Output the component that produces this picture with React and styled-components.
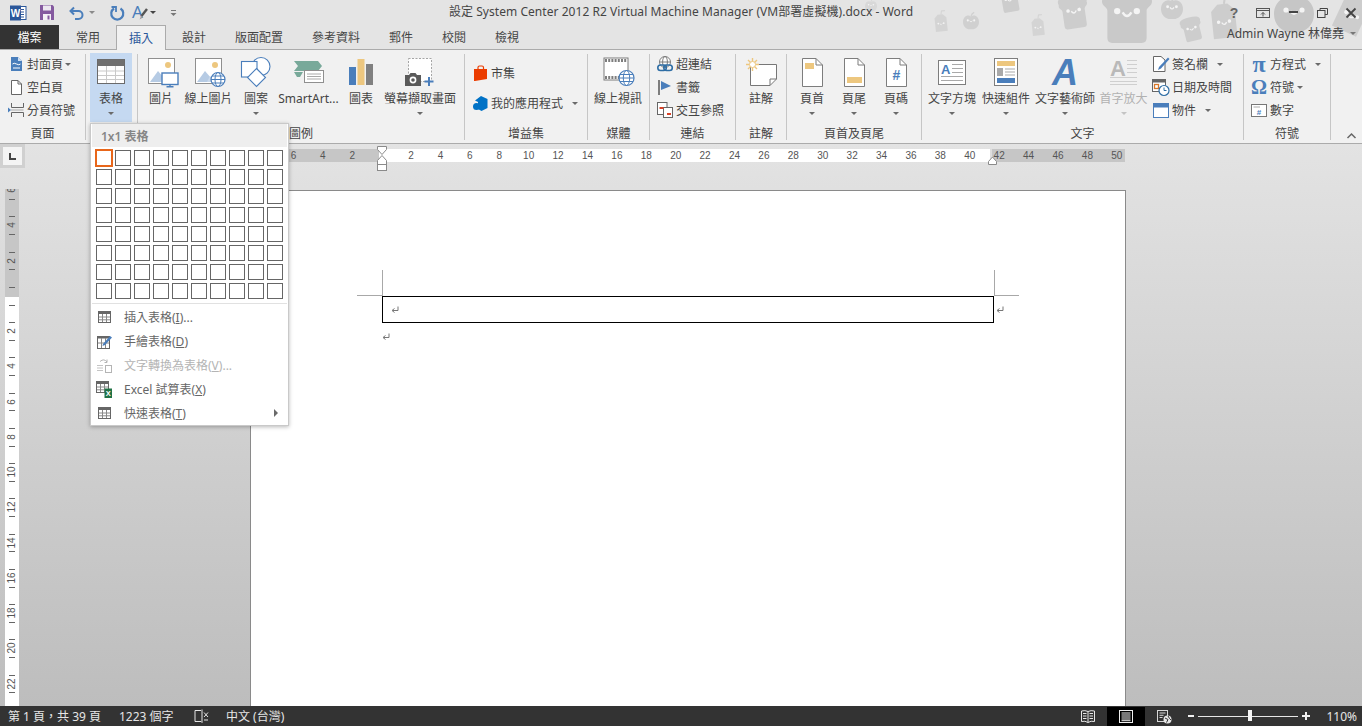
import React from "react";
import styled, { createGlobalStyle } from "styled-components";

const FONT = `"Noto Sans", "Noto Sans CJK TC", sans-serif`;
const BLUE = "#4a7ebb";
const ORANGE = "#edc77f";

const Global = createGlobalStyle`
  html, body { margin: 0; padding: 0; height: 100%; overflow: hidden; }
  body { font-family: ${FONT}; font-size: 12px; color: #444; }
  #root { height: 100%; }
`;

const Shell = styled.div`
  position: relative;
  width: 1362px;
  height: 726px;
  display: flex;
  flex-direction: column;
  overflow: hidden;
`;
const Header = styled.header`
  position: relative;
  background: #e4e4e4;
  flex: none;
  display: flex;
  flex-direction: column;
`;
const DoodleLayer = styled.svg`
  position: absolute;
  left: 0;
  top: 0;
`;
const TitleBar = styled.div`
  position: relative;
  height: 25px;
  display: grid;
  grid-template-columns: 1fr auto 1fr;
  align-items: center;
`;
const Qat = styled.div`
  display: flex;
  align-items: center;
  padding-left: 9px;
`;
const QatItem = styled.span`
  display: flex;
  margin-left: ${(p) => p.$ml || 0}px;
`;
const Title = styled.div`
  font-size: 12px;
  color: #444;
  white-space: nowrap;
  letter-spacing: 0.05px;
  line-height: 20px;
  padding-bottom: 2px;
`;
const WinControls = styled.div`
  display: flex;
  justify-content: flex-end;
  align-items: center;
`;
const WinBtn = styled.span`
  width: ${(p) => p.$w}px;
  padding-left: ${(p) => p.$pl || 0}px;
  box-sizing: border-box;
  display: flex;
  justify-content: center;
`;
const TabRow = styled.nav`
  position: relative;
  height: 25px;
  box-sizing: border-box;
  border-bottom: 1px solid #ababab;
  display: flex;
  align-items: stretch;
`;
const FileTab = styled.div`
  width: 59px;
  background: #333;
  color: #fff;
  display: flex;
  align-items: center;
  justify-content: center;
  margin-right: 2.5px;
`;
const Tab = styled.div`
  padding: 0 ${(p) => (p.$active ? 12 : 13)}px;
  margin: 0 ${(p) => (p.$active ? 1.5 : 0.5)}px;
  border: 1px solid ${(p) => (p.$active ? "#ababab" : "transparent")};
  border-bottom: ${(p) => (p.$active ? "none" : "1px solid transparent")};
  background: ${(p) => (p.$active ? "#f1f1f1" : "transparent")};
  color: ${(p) => (p.$active ? "#2b579a" : "#444")};
  height: ${(p) => (p.$active ? 25 : 24)}px;
  box-sizing: border-box;
  display: flex;
  align-items: center;
`;
const Account = styled.div`
  margin-left: auto;
  padding-right: 6px;
  height: 16px;
  display: flex;
  align-items: center;
  gap: 6px;
  color: #444;
  white-space: nowrap;
`;
const Ribbon = styled.section`
  position: relative;
  flex: none;
  height: 94px;
  box-sizing: border-box;
  background: #f1f1f1;
  border-bottom: 1px solid #ababab;
  display: flex;
  align-items: flex-start;
  padding-top: 4px;
`;
const Group = styled.div`
  width: ${(p) => p.$w}px;
  height: 86px;
  flex: none;
  box-sizing: border-box;
  border-right: 1px solid #c6c6c6;
  display: flex;
  flex-direction: column;
`;
const GroupBody = styled.div`
  height: 72px;
  display: flex;
  align-items: flex-start;
  padding-left: ${(p) => p.$pl || 0}px;
`;
const GroupLabel = styled.div`
  height: 14px;
  line-height: 16px;
  text-align: center;
  color: #444;
`;
const Big = styled.div`
  padding: 0 ${(p) => (p.$px === undefined ? 6 : p.$px)}px;
  width: ${(p) => (p.$w ? `${p.$w}px` : "auto")};
  height: ${(p) => (p.$active ? 69 : 70)}px;
  margin-top: ${(p) => (p.$active ? -1 : 0)}px;
  box-sizing: border-box;
  flex: none;
  background: ${(p) => (p.$active ? "#c5d9f1" : "transparent")};
  color: ${(p) => (p.$disabled ? "#b1b1b1" : "#444")};
  display: flex;
  flex-direction: column;
  align-items: center;
  white-space: nowrap;
`;
const BigIcon = styled.div`
  height: ${(p) => (p.$active ? 38 : 37)}px;
  box-sizing: border-box;
  padding-bottom: 1px;
  display: flex;
  align-items: center;
  justify-content: center;
`;
const BigLabel = styled.div`
  height: 16px;
  line-height: 16px;
`;
const BigArrow = styled.div`
  height: 13px;
  display: flex;
  align-items: center;
`;
const Caret = styled.span`
  display: inline-block;
  flex: none;
  width: 0;
  height: 0;
  border-left: 3.5px solid transparent;
  border-right: 3.5px solid transparent;
  border-top: 3.5px solid ${(p) => p.$c || "#6a6a6a"};
  margin-left: ${(p) => p.$ml || 0}px;
`;
const Stack = styled.div`
  height: 70px;
  box-sizing: border-box;
  padding-bottom: ${(p) => p.$pb}px;
  margin-left: ${(p) => p.$ml || 0}px;
  display: flex;
  flex-direction: column;
  justify-content: center;
  gap: ${(p) => p.$gap || 0}px;
  flex: none;
`;
const Small = styled.div`
  flex: none;
  height: 23px;
  display: flex;
  align-items: center;
  white-space: nowrap;
  color: #444;
`;
const SmallIcon = styled.span`
  width: 18px;
  margin-right: 2px;
  display: flex;
  justify-content: center;
  align-items: center;
`;
const GlyphIcon = styled.span`
  font-family: "Liberation Serif", serif;
  font-weight: bold;
  font-size: ${(p) => p.$s}px;
  line-height: 18px;
  color: ${BLUE};
`;
const Collapse = styled.div`
  position: absolute;
  right: 6px;
  bottom: 4px;
  display: flex;
`;
const Workspace = styled.main`
  position: relative;
  flex: 1;
  min-height: 0;
  overflow: hidden;
  background: linear-gradient(#e3e3e3, #bdbdbd);
  display: grid;
  grid-template-columns: 25px 225px 876px 1fr;
  grid-template-rows: 46px 1fr;
`;
const Corner = styled.div`
  grid-column: 1;
  grid-row: 1;
  height: 24px;
  box-sizing: border-box;
  padding: 3px;
  background: #d0d0d0;
`;
const CornerBtn = styled.div`
  width: 19px;
  height: 18px;
  background: #f4f4f4;
  display: flex;
  align-items: center;
  justify-content: center;
`;
const HRulerSlot = styled.div`
  grid-column: 3;
  grid-row: 1;
  padding-top: 5px;
  position: relative;
`;
const HRuler = styled.div`
  width: 875px;
  height: 13px;
  overflow: hidden;
  display: flex;
  background: linear-gradient(
    to right,
    #c6c6c6 129px,
    #fff 129px,
    #fff 740px,
    #dedede 740px,
    #dedede 742px,
    #c6c6c6 742px
  );
`;
const HTick = styled.span`
  flex: none;
  width: 29.42px;
  text-align: center;
  font: 10px/13px "Liberation Sans", sans-serif;
  color: #555;
  &:first-child {
    margin-left: -0.7px;
  }
`;
const RulerMarks = styled.svg`
  position: absolute;
  left: 120px;
  top: 0;
`;
const VRulerSlot = styled.div`
  grid-column: 1;
  grid-row: 2;
  margin: -1px 6px 0 5px;
  overflow: hidden;
  background: linear-gradient(#c6c6c6 108px, #fff 108px);
`;
const VTick = styled.div`
  position: relative;
  height: 35.25px;
  display: flex;
  align-items: center;
  justify-content: center;
  font: 10px/10px "Liberation Sans", sans-serif;
  color: #555;
  &:first-child {
    margin-top: -16.6px;
  }
  & > span {
    display: block;
    transform: rotate(-90deg);
  }
  &::before,
  &::after {
    content: "";
    position: absolute;
    left: 4px;
    width: 6px;
    height: 1px;
    background: #666;
  }
  &::before {
    top: 8.8px;
  }
  &::after {
    top: 26.4px;
  }
`;
const Page = styled.div`
  grid-column: 3;
  grid-row: 2;
  box-sizing: border-box;
  height: 700px;
  background: #fff;
  border: 1px solid #8a8a8a;
  padding: 105px 0 0 131px;
`;
const TableRow = styled.div`
  position: relative;
  display: flex;
  align-items: center;
`;
const DocTable = styled.div`
  width: 612px;
  height: 27px;
  box-sizing: border-box;
  border: 1px solid #000;
  padding-left: 8px;
  display: flex;
  align-items: center;
`;
const CropMark = styled.span`
  position: absolute;
  background: #a8a8a8;
  ${(p) =>
    p.$v
      ? `width:1px;height:26px;top:-26px;left:${p.$x}px;`
      : `height:1px;width:25px;top:-1px;left:${p.$x}px;`}
`;
const AfterMark = styled.span`
  display: flex;
  margin-left: 2px;
`;
const ParaMark = styled.div`
  display: flex;
  margin-top: 10px;
`;
const Status = styled.footer`
  flex: none;
  height: 20px;
  background: #333;
  color: #e6e6e6;
  display: flex;
  justify-content: space-between;
  align-items: stretch;
`;
const StatusSide = styled.div`
  display: flex;
  align-items: center;
  padding-left: ${(p) => p.$pl || 0}px;
  padding-right: ${(p) => p.$pr || 0}px;
`;
const StatusItem = styled.span`
  width: ${(p) => (p.$w ? `${p.$w}px` : "auto")};
  display: flex;
  align-items: center;
  white-space: nowrap;
`;
const ViewBtn = styled.span`
  width: 38px;
  height: 19px;
  margin-top: 1px;
  display: flex;
  align-items: center;
  justify-content: center;
  background: ${(p) => (p.$active ? "#000" : "transparent")};
`;
const Slider = styled.div`
  position: relative;
  width: 100px;
  height: 1px;
  margin: 0 4px;
  background: #e6e6e6;
`;
const Thumb = styled.span`
  position: absolute;
  left: 50px;
  top: -5.5px;
  width: 4px;
  height: 11px;
  background: #f4f4f4;
`;
const Percent = styled.span`
  width: 37px;
  margin-left: 10px;
  text-align: right;
`;
const ZoomSign = styled.span`
  display: flex;
  width: 8px;
  margin-left: ${(p) => p.$ml || 0}px;
`;
const Menu = styled.div`
  position: absolute;
  left: 90px;
  top: 123px;
  width: 199px;
  box-sizing: border-box;
  background: #fff;
  border: 1px solid #c9c9c9;
  box-shadow: 0 1px 4px rgba(0, 0, 0, 0.28);
  display: flex;
  flex-direction: column;
`;
const MenuHead = styled.div`
  height: 23px;
  margin: 0 1px;
  padding-left: 9px;
  background: #eeeeee;
  color: #868686;
  font-weight: 600;
  line-height: 25px;
`;
const Grid = styled.div`
  display: grid;
  grid-template-columns: repeat(10, 16px);
  grid-auto-rows: 16px;
  gap: 3px;
  padding: 3px 0 0 5px;
`;
const Cell = styled.span`
  box-sizing: border-box;
  background: #fff;
  border: 1px solid ${(p) => (p.$on ? "#e8661a" : "#666")};
  box-shadow: ${(p) => (p.$on ? "0 0 0 1px #e8661a" : "none")};
`;
const MenuSep = styled.div`
  height: 1px;
  margin: 4px 1px 1px;
  background: #e1e1e1;
`;
const MenuItem = styled.div`
  height: 24px;
  display: flex;
  align-items: center;
  color: ${(p) => (p.$disabled ? "#b4b4b4" : "#666")};
  white-space: nowrap;
`;
const MenuIcon = styled.span`
  width: 18px;
  margin: 0 11px 0 4px;
  display: flex;
  justify-content: center;
`;
const SubArrow = styled.span`
  margin-left: auto;
  margin-right: 10px;
  width: 0;
  height: 0;
  border-top: 4px solid transparent;
  border-bottom: 4px solid transparent;
  border-left: 4px solid #6a6a6a;
`;

const I = ({ w, h, pad = 0, children }) => (
  <svg width={w + pad} height={h} viewBox={`${-pad} 0 ${w + pad} ${h}`} style={{ display: "block", overflow: "visible" }}>
    {children}
  </svg>
);

const Face = ({ s = 1 }) => (
  <g fill="none" stroke="#f4f4f4">
    <circle cx={-4 * s} cy={-2 * s} r={1.3 * s} fill="#f4f4f4" stroke="none" />
    <circle cx={4 * s} cy={-2 * s} r={1.3 * s} fill="#f4f4f4" stroke="none" />
    <path d={`M${-1.8 * s} ${-1.5 * s} Q0 ${1.5 * s} ${1.8 * s} ${-1.5 * s}`} strokeWidth={s} />
  </g>
);
const Toast = ({ x, y, s, r = 0, c = "#cdcdcd" }) => (
  <g transform={`translate(${x} ${y}) rotate(${r}) scale(${s})`}>
    <path
      fill={c}
      d="M-10-7C-12-12-6-13 0-13S12-12 10-7C11-4 8-4 8-2V9Q8 11 6 11H-6Q-8 11-8 9V-2C-8-4-11-4-10-7Z"
    />
    <Face />
  </g>
);
const Apple = ({ x, y, s, c = "#cdcdcd" }) => (
  <g transform={`translate(${x} ${y}) scale(${s})`}>
    <path fill={c} d="M0-7C-5-10-10-6-10 0S-5 10 0 9C5 10 10 6 10 0S5-10 0-7Z" />
    <path stroke={c} strokeWidth="1.6" fill="none" d="M0-7Q1-11 4-12" />
    <Face />
  </g>
);
const Juice = ({ x, y, s, r = 0, c = "#cdcdcd" }) => (
  <g transform={`translate(${x} ${y}) rotate(${r}) scale(${s})`}>
    <path fill={c} d="M-7-6L-3-10H3L7-6V10H-7Z" />
    <path stroke={c} strokeWidth="1.2" fill="none" d="M1-10L2-14H6" />
    <g transform="translate(0 2)">
      <Face s={0.8} />
    </g>
  </g>
);
const Doodles = () => (
  <DoodleLayer width="1362" height="50" viewBox="0 0 1362 50">
    <Apple x={871} y={6} s={0.6} c="#d8d8d8" />
    <Juice x={941} y={23} s={0.85} r={-6} c="#d4d4d4" />
    <Apple x={971} y={22} s={0.8} c="#d0d0d0" />
    <Toast x={1010} y={1} s={1} r={-10} />
    <Juice x={1038} y={27} s={0.85} r={-6} c="#d4d4d4" />
    <Toast x={1074} y={13} s={1.4} r={-8} />
    <Toast x={1127} y={16} s={2.45} c="#c9c9c9" />
    <Apple x={1172} y={9} s={1.1} />
    <Toast x={1192} y={30} s={1} r={-14} />
    <Juice x={1224} y={21} s={1.7} r={-6} />
    <Apple x={1294} y={14} s={2} c="#c6c6c6" />
    <Juice x={1352} y={14} s={1.9} r={25} />
  </DoodleLayer>
);

const WordLogo = () => (
  <I w={18} h={16}>
    <rect x="8" y="1.5" width="9" height="13" fill="#fff" stroke="#2b579a" />
    <path d="M12 4.5h3M12 7h3M12 9.5h3M12 12h3" stroke="#2b579a" />
    <rect x="1" y="0.5" width="11" height="15" fill="#2b579a" />
    <text x="6.5" y="11.5" fontSize="10" fontWeight="700" fill="#fff" textAnchor="middle" fontFamily="Liberation Sans">W</text>
  </I>
);
const SaveIcon = () => (
  <I w={14} h={15}>
    <path d="M0 0H12.5L14 1.5V15H0Z" fill="#84599f" />
    <rect x="3" y="0.5" width="8" height="5" fill="#ece7f0" />
    <rect x="3" y="9" width="8" height="6" fill="#f4f0f6" />
    <rect x="7.5" y="10.5" width="2" height="4" fill="#84599f" />
  </I>
);
const UndoIcon = () => (
  <I w={15} h={14}>
    <path d="M5 1.5L1.5 5L5 8.5M1.5 5H9.5A4 4 0 0 1 9.5 13H6" fill="none" stroke={BLUE} strokeWidth="2" />
  </I>
);
const RedoIcon = () => (
  <I w={14} h={14}>
    <path d="M4 2.5A6 6 0 1 0 10.5 2.5" fill="none" stroke={BLUE} strokeWidth="2.2" />
    <path d="M1.5 1H6V6" fill="none" stroke={BLUE} strokeWidth="1.8" />
  </I>
);
const FormatIcon = () => (
  <I w={16} h={17}>
    <text x="0" y="14" fontSize="17" fill={BLUE} fontFamily="Noto Sans">A</text>
    <path d="M15 5L9.5 12" stroke="#555" strokeWidth="2.4" />
    <path d="M9.5 11.5L7.5 15.5L11 13.5Z" fill="#9a9a9a" />
  </I>
);
const Customize = () => (
  <I w={7} h={8}>
    <path d="M1 1.5H6" stroke="#777" />
    <path d="M0.5 4H6.5L3.5 7Z" fill="#777" />
  </I>
);
const HelpIcon = () => (
  <I w={10} h={12}>
    <text x="5" y="11" fontSize="14" fontWeight="700" fill="#666" textAnchor="middle" fontFamily="Liberation Sans">?</text>
  </I>
);
const DisplayIcon = () => (
  <I w={14} h={10}>
    <rect x="0.5" y="0.5" width="13" height="9" fill="none" stroke="#555" />
    <path d="M1 2.5H13" stroke="#555" />
    <path d="M7 8.5V4.5M5 6.5L7 4.5L9 6.5" fill="none" stroke="#555" />
  </I>
);
const MinIcon = () => (
  <I w={9} h={3}>
    <rect width="9" height="2" fill="#444" />
  </I>
);
const RestoreIcon = () => (
  <I w={11} h={10}>
    <path d="M3 2.5V0.5H10.5V6.5H8" fill="none" stroke="#444" />
    <rect x="0.5" y="2.5" width="7.5" height="7" fill="none" stroke="#444" />
  </I>
);
const CloseIcon = () => (
  <I w={10} h={10}>
    <path d="M0.5 0.5L9.5 9.5M9.5 0.5L0.5 9.5" stroke="#444" strokeWidth="1.8" />
  </I>
);

const CoverIcon = () => (
  <I w={11} h={14}>
    <path d="M0 0H7L11 4V14H0Z" fill={BLUE} />
    <path d="M7 0V4H11" fill="#cfe0f3" />
    <path d="M1.5 7Q3 5.5 5.5 7T9.5 7" fill="none" stroke="#fff" />
    <path d="M2 11H9" stroke="#fff" />
  </I>
);
const BlankIcon = () => (
  <I w={11} h={15}>
    <path d="M0.5 0.5H7L10.5 4V14.5H0.5Z" fill="#fff" stroke="#666" />
    <path d="M7 0.5V4H10.5" fill="none" stroke="#666" />
  </I>
);
const BreakIcon = () => (
  <I w={16} h={16}>
    <path d="M3.5 1V5.5H15.5V1M3.5 15V10.5H15.5V15" fill="none" stroke="#666" />
    <path d="M0 5.5L3 8L0 10.5Z" fill={BLUE} />
    <path d="M3 8H15.5" stroke="#aaa" />
  </I>
);
const TableBig = () => (
  <I w={28} h={25}>
    <rect x="0.5" y="0.5" width="27" height="24" fill="#fff" stroke="#6a6a6a" />
    <rect x="1" y="1" width="26" height="6" fill="#707070" />
    <path d="M1 12H27M1 16.5H27M1 20.5H27" stroke="#c9c9c9" />
    <path d="M9.5 7V24M18.5 7V24" stroke="#c9c9c9" />
  </I>
);
const PicBase = () => (
  <>
    <rect x="0.5" y="0.5" width="26" height="25" fill="#fff" stroke="#8f8f8f" />
    <circle cx="20" cy="7" r="3" fill={ORANGE} />
    <path d="M2 24L10 13L16 20L16 24Z" fill="#b6cbe4" />
    <path d="M12 24L15 18L20 24Z" fill="#c9d9ec" />
  </>
);
const PictureIcon = () => (
  <I w={31} h={29} pad={4}>
    <PicBase />
    <rect x="14" y="15" width="16" height="11.5" fill="#fff" stroke={BLUE} strokeWidth="1.4" />
    <path d="M22 26.5V29M18.5 28.7H25.5" stroke={BLUE} strokeWidth="1.4" />
  </I>
);
const OnlinePicIcon = () => (
  <I w={31} h={29} pad={4}>
    <PicBase />
    <circle cx="23" cy="21.5" r="7" fill="#fff" stroke={BLUE} strokeWidth="1.2" />
    <ellipse cx="23" cy="21.5" rx="3" ry="7" fill="none" stroke={BLUE} />
    <path d="M16 21.5H30M17 18H29M17 25H29" stroke={BLUE} />
  </I>
);
const ShapesIcon = () => (
  <I w={30} h={30}>
    <circle cx="20" cy="9.5" r="9" fill="#fff" stroke={BLUE} strokeWidth="1.1" />
    <rect x="0.5" y="4.5" width="15.5" height="15.5" fill="#fff" stroke={BLUE} strokeWidth="1.1" />
    <path d="M15.5 11.5L24.5 20.5L15.5 29.5L6.5 20.5Z" fill="#fff" stroke={BLUE} strokeWidth="1.1" />
  </I>
);
const SmartArtIcon = () => (
  <I w={30} h={24}>
    <path d="M0 1H24L28 6L24 11H0L4 6Z" fill="#78a99a" />
    <path d="M0 12H9L6 17H3Z" fill="#78a99a" />
    <rect x="10.5" y="10.5" width="19" height="12" fill="#fff" stroke="#8f8f8f" />
    <path d="M13 14H27M13 16.5H27M13 19H27" stroke="#a9a9a9" />
  </I>
);
const ChartIcon = () => (
  <I w={24} h={26}>
    <rect x="0" y="8" width="7" height="18" fill={BLUE} />
    <rect x="8.5" y="0" width="7" height="26" fill={ORANGE} />
    <rect x="17" y="5" width="7" height="21" fill="#808080" />
  </I>
);
const ScreenshotIcon = () => (
  <I w={30} h={29}>
    <rect x="3.5" y="0.5" width="23" height="23" fill="#fff" stroke="#a5a5a5" strokeDasharray="2 1.5" />
    <path d="M0 17H4L5.5 15H10.5L12 17H16V28H0Z" fill="#5a5a5a" />
    <circle cx="8" cy="22" r="3.4" fill="#fff" />
    <circle cx="8" cy="22" r="1.8" fill="#5a5a5a" />
    <path d="M24 19V28M19.5 23.5H28.5" stroke={BLUE} strokeWidth="2" />
  </I>
);
const StoreIcon = () => (
  <I w={15} h={16}>
    <path d="M5 4V2.5Q5 1 6.5 1H9Q10.5 1 10.5 2.5V4" fill="none" stroke="#eb3c00" strokeWidth="1.2" />
    <path d="M1 4H14V14L2 16H1Z" fill="#eb3c00" />
  </I>
);
const MyAppsIcon = () => (
  <I w={15} h={15}>
    <path d="M8 0L14.5 3V12L8.5 15L5 13V6L2 4.5Z" fill="#0072c6" />
    <circle cx="3.5" cy="10.5" r="3.5" fill="#0072c6" />
  </I>
);
const VideoIcon = () => (
  <I w={33} h={30} pad={3}>
    <rect x="1" y="1" width="24" height="22" fill="#fff" stroke="#7d7d7d" />
    <path d="M2 3.5H24M2 20.5H24" stroke="#7d7d7d" strokeWidth="3" strokeDasharray="2 1.2" />
    <circle cx="23.5" cy="21" r="7.5" fill="#fff" stroke={BLUE} strokeWidth="1.2" />
    <ellipse cx="23.5" cy="21" rx="3.2" ry="7.5" fill="none" stroke={BLUE} />
    <path d="M16 21H31M17 17.5H30M17 24.5H30" stroke={BLUE} />
  </I>
);
const LinkIcon = () => (
  <I w={16} h={16}>
    <circle cx="8" cy="6" r="5.5" fill="#fff" stroke="#7d7d7d" />
    <ellipse cx="8" cy="6" rx="2.4" ry="5.5" fill="none" stroke="#7d7d7d" />
    <path d="M2.5 6H13.5" stroke="#7d7d7d" />
    <rect x="0.8" y="9" width="8.5" height="5.5" rx="2.7" fill="none" stroke="#2f6ea5" strokeWidth="1.6" />
    <rect x="6.8" y="9" width="8.5" height="5.5" rx="2.7" fill="none" stroke="#2f6ea5" strokeWidth="1.6" />
  </I>
);
const BookmarkIcon = () => (
  <I w={14} h={15}>
    <rect x="0" y="0" width="2" height="15" fill="#7d7d7d" />
    <path d="M3 1L13 6L3 10Z" fill={BLUE} />
  </I>
);
const CrossRefIcon = () => (
  <I w={16} h={16}>
    <rect x="0.5" y="0.5" width="9.5" height="12" fill="#fff" stroke="#666" />
    <rect x="6.5" y="5.5" width="9" height="10" fill="#fff" stroke="#666" />
    <rect x="2.5" y="5" width="4" height="2" fill="#d9432a" />
    <rect x="10" y="11" width="4" height="2" fill="#d9432a" />
  </I>
);
const CommentIcon = () => (
  <I w={31} h={28}>
    <path d="M4.5 6.5H30.5V21L24 27.5H4.5Z" fill="#fff" stroke="#777" />
    <path d="M24 27.5V21H30.5" fill="none" stroke="#777" />
    <g stroke={ORANGE} strokeWidth="1.4">
      <path d="M6.5 0V13M0 6.5H13M2 2L11 11M11 2L2 11" />
    </g>
    <circle cx="6.5" cy="6.5" r="3" fill="#fff" stroke={ORANGE} />
  </I>
);
const DocOutline = ({ children }) => (
  <I w={21} h={29}>
    <path d="M0.5 0.5H14L20.5 7V28.5H0.5Z" fill="#fff" stroke="#7d7d7d" />
    <path d="M14 0.5V7H20.5" fill="none" stroke="#7d7d7d" />
    {children}
  </I>
);
const TextBoxIcon = () => (
  <I w={28} h={25}>
    <rect x="0.5" y="0.5" width="27" height="24" fill="#fff" stroke="#7d7d7d" />
    <text x="3" y="14" fontSize="13" fontWeight="700" fill={BLUE} fontFamily="Liberation Sans">A</text>
    <path d="M14 4.5H25M14 8.5H25M14 12.5H25M3 16.5H25M3 20.5H25" stroke="#a9a9a9" />
  </I>
);
const QuickPartsIcon = () => (
  <I w={24} h={28}>
    <rect x="0.5" y="0.5" width="23" height="27" fill="#fff" stroke="#7d7d7d" />
    <rect x="3" y="3" width="18" height="5" fill={ORANGE} />
    <rect x="3" y="10" width="6" height="8" fill="#a9a9a9" />
    <path d="M11 11H21M11 14H21M11 17H21" stroke="#a9a9a9" />
    <rect x="3" y="20" width="18" height="5" fill={BLUE} />
  </I>
);
const WordArtIcon = () => (
  <I w={26} h={28}>
    <text x="13" y="27" fontSize="36" fontWeight="700" fontStyle="italic" fill={BLUE} textAnchor="middle" fontFamily="Liberation Sans">A</text>
  </I>
);
const DropCapIcon = () => (
  <I w={28} h={28}>
    <text x="0" y="18" fontSize="22" fontWeight="700" fill="#b9b9b9" fontFamily="Liberation Sans">A</text>
    <path d="M17 2.5H27M17 6.5H27M17 10.5H27M17 14.5H27M0 19.5H27M0 23.5H27M0 26.5H27" stroke="#cfcfcf" />
  </I>
);
const SignIcon = () => (
  <I w={17} h={16}>
    <path d="M0.5 0.5H8L12 4V15.5H0.5Z" fill="#fff" stroke="#666" />
    <path d="M6 11L15 1.5L16.5 3L8 12.5L5 14Z" fill={BLUE} />
  </I>
);
const DateIcon = () => (
  <I w={18} h={17}>
    <rect x="0.5" y="0.5" width="13" height="12" fill="#fff" stroke="#666" />
    <rect x="0.5" y="0.5" width="13" height="3" fill="#666" />
    <rect x="2.5" y="5.5" width="4" height="4" fill="none" stroke="#d9782a" strokeWidth="1.3" />
    <circle cx="12" cy="11.5" r="5" fill="#fff" stroke="#2f6ea5" strokeWidth="1.2" />
    <path d="M12 8.5V11.5H14.5" fill="none" stroke="#2f6ea5" />
  </I>
);
const ObjectIcon = () => (
  <I w={16} h={15}>
    <rect x="0.5" y="0.5" width="15" height="14" fill="#fff" stroke={BLUE} />
    <rect x="0.5" y="0.5" width="15" height="4" fill={BLUE} />
  </I>
);
const NumberIcon = () => (
  <I w={16} h={13}>
    <rect x="0.5" y="0.5" width="15" height="12" fill="#fff" stroke="#777" />
    <path d="M2.5 3H9" stroke="#aaa" />
    <text x="8" y="11" fontSize="8" fontWeight="700" fill={BLUE} textAnchor="middle" fontFamily="Liberation Sans">#</text>
  </I>
);
const Chevron = () => (
  <I w={9} h={6}>
    <path d="M0.5 5L4.5 1L8.5 5" fill="none" stroke="#666" strokeWidth="1.5" />
  </I>
);
const LIcon = () => (
  <I w={7} h={7}>
    <path d="M1 0V6H7" fill="none" stroke="#444" strokeWidth="2" />
  </I>
);
const ReturnMark = () => (
  <I w={8} h={8}>
    <path d="M7 0.5V4.5H1.5M3.5 2.5L1 4.5L3.5 6.5" fill="none" stroke="#777" />
  </I>
);

const TableSmall = () => (
  <I w={13} h={12}>
    <rect x="0.5" y="0.5" width="12" height="11" fill="#fff" stroke="#666" />
    <rect x="0.5" y="0.5" width="12" height="2.5" fill="#666" />
    <path d="M1 6H12M1 8.8H12M4.5 3V11M8.5 3V11" stroke="#888" />
  </I>
);
const DrawTableIcon = () => (
  <I w={15} h={15}>
    <rect x="0.5" y="2.5" width="12" height="12" fill="#fff" stroke="#666" />
    <rect x="0.5" y="2.5" width="12" height="2" fill="#666" />
    <path d="M1 9H12M4.5 4V14M8.5 4V14" stroke="#888" />
    <path d="M6 10L13 2L15 3.5L8 11L5.5 12Z" fill={BLUE} />
  </I>
);
const ConvertIcon = () => (
  <I w={15} h={15}>
    <path d="M0 7.5H6M0 10H6M0 12.5H6" stroke="#c4c4c4" />
    <rect x="8.5" y="7.5" width="6" height="7" fill="#fff" stroke="#b4b4b4" />
    <path d="M3 3.5Q7 0 10 4M10 1.5V4.5H7.5" fill="none" stroke="#b4b4b4" />
  </I>
);
const ExcelIcon = () => (
  <I w={16} h={17}>
    <rect x="0.5" y="0.5" width="12" height="11" fill="#fff" stroke="#666" />
    <rect x="0.5" y="0.5" width="12" height="2.5" fill="#666" />
    <path d="M1 6H12M1 8.8H12M4.5 3V11M8.5 3V11" stroke="#888" />
    <rect x="8.5" y="7.5" width="7.5" height="9.5" fill="#207245" />
    <text x="12.2" y="15" fontSize="7.5" fontWeight="700" fill="#fff" textAnchor="middle" fontFamily="Liberation Sans">X</text>
  </I>
);

const StatusBook = () => (
  <I w={15} h={14}>
    <path d="M7 1.5H1V12.5H7L8 13.5V0.5" fill="none" stroke="#e6e6e6" />
    <path d="M10 3.5L14 8M14 3.5L10 8" stroke="#e6e6e6" />
    <path d="M10 11H14" stroke="#e6e6e6" />
  </I>
);
const ReadIcon = () => (
  <I w={14} h={13}>
    <path d="M7 1.5Q4 0 0.5 1V11.5Q4 10.5 7 12.5Q10 10.5 13.5 11.5V1Q10 0 7 1.5ZM7 1.5V12.5" fill="#333" stroke="#e6e6e6" />
    <path d="M2 3.5H5.5M2 6H5.5M2 8.5H5.5M8.5 3.5H12M8.5 6H12M8.5 8.5H12" stroke="#e6e6e6" />
  </I>
);
const PrintIcon = () => (
  <I w={14} h={13}>
    <rect x="0.5" y="0.5" width="13" height="12" fill="#000" stroke="#f0f0f0" />
    <path d="M2.5 3H11.5M2.5 5H11.5M2.5 7H11.5M2.5 9H11.5M2.5 10.7H11.5" stroke="#f0f0f0" />
  </I>
);
const WebIcon = () => (
  <I w={15} h={14}>
    <rect x="0.5" y="0.5" width="10" height="11" fill="#333" stroke="#d8d8d8" />
    <path d="M2.5 3H8.5M2.5 5.3H6.5M2.5 7.5H5.5" stroke="#d8d8d8" />
    <circle cx="10.5" cy="9.5" r="4" fill="#e6e6e6" />
    <path d="M8 8L11 9.5L9.5 12.5M11 6L12.5 8.5L14 10" stroke="#333" fill="none" />
  </I>
);
const MinusSign = () => (
  <I w={8} h={2}>
    <rect x="2" width="6" height="2" fill="#f0f0f0" />
  </I>
);
const PlusSign = () => (
  <I w={8} h={8}>
    <path d="M4 0V8M0 4H8" stroke="#f0f0f0" strokeWidth="2" />
  </I>
);

const BigButton = ({ icon, label, arrow, ...rest }) => (
  <Big {...rest}>
    <BigIcon $active={rest.$active}>{icon}</BigIcon>
    <BigLabel>{label}</BigLabel>
    {arrow && (
      <BigArrow>
        <Caret $c={rest.$disabled ? "#c4c4c4" : undefined} />
      </BigArrow>
    )}
  </Big>
);
const SmallButton = ({ icon, label, caret }) => (
  <Small>
    <SmallIcon>{icon}</SmallIcon>
    {label}
    {caret !== undefined && <Caret $ml={caret} />}
  </Small>
);

const hNums = ["8", "6", "4", "2", "", ...[2, 4, 6, 8, 10, 12, 14, 16, 18, 20, 22, 24, 26, 28, 30, 32, 34, 36, 38, 40, 42, 44, 46, 48, 50].map(String)];
const vNums = ["6", "4", "2", "", "2", "4", "6", "8", "10", "12", "14", "16", "18", "20", "22"];
const tabs = ["常用", "插入", "設計", "版面配置", "參考資料", "郵件", "校閱", "檢視"];

export default function App() {
  return (
    <Shell>
      <Global />
      <Header>
        <Doodles />
        <TitleBar>
          <Qat>
            <QatItem><WordLogo /></QatItem>
            <QatItem $ml={13}><SaveIcon /></QatItem>
            <QatItem $ml={15}><UndoIcon /></QatItem>
            <QatItem $ml={5}><Caret $c="#8a8a8a" /></QatItem>
            <QatItem $ml={15}><RedoIcon /></QatItem>
            <QatItem $ml={8}><FormatIcon /></QatItem>
            <QatItem $ml={2}><Caret $c="#444" /></QatItem>
            <QatItem $ml={14}><Customize /></QatItem>
          </Qat>
          <Title>設定 System Center 2012 R2 Virtual Machine Manager (VM部署虛擬機).docx - Word</Title>
          <WinControls>
            <WinBtn $w={29}><HelpIcon /></WinBtn>
            <WinBtn $w={29}><DisplayIcon /></WinBtn>
            <WinBtn $w={32.5}><MinIcon /></WinBtn>
            <WinBtn $w={24}><RestoreIcon /></WinBtn>
            <WinBtn $w={28} $pl={6}><CloseIcon /></WinBtn>
          </WinControls>
        </TitleBar>
        <TabRow>
          <FileTab>檔案</FileTab>
          {tabs.map((t) => (
            <Tab key={t} $active={t === "插入"}>{t}</Tab>
          ))}
          <Account>
            Admin Wayne 林偉堯
            <Caret $c="#777" />
          </Account>
        </TabRow>
      </Header>

      <Ribbon>
        <Group $w={86}>
          <GroupBody $pl={7}>
            <Stack $pb={4}>
              <SmallButton icon={<CoverIcon />} label="封面頁" caret={2} />
              <SmallButton icon={<BlankIcon />} label="空白頁" />
              <SmallButton icon={<BreakIcon />} label="分頁符號" />
            </Stack>
          </GroupBody>
          <GroupLabel>頁面</GroupLabel>
        </Group>
        <Group $w={52}>
          <GroupBody $pl={4}>
            <BigButton $active $w={42} icon={<TableBig />} label="表格" arrow />
          </GroupBody>
          <GroupLabel />
        </Group>
        <Group $w={327}>
          <GroupBody $pl={5}>
            <BigButton $w={36} $px={0} icon={<PictureIcon />} label="圖片" />
            <BigButton $w={59} $px={0} icon={<OnlinePicIcon />} label="線上圖片" />
            <BigButton $w={36} $px={0} icon={<ShapesIcon />} label="圖案" arrow />
            <BigButton $w={69} $px={0} icon={<SmartArtIcon />} label="SmartArt..." />
            <BigButton $w={36} $px={0} icon={<ChartIcon />} label="圖表" />
            <BigButton $w={82} $px={0} icon={<ScreenshotIcon />} label="螢幕擷取畫面" arrow />
          </GroupBody>
          <GroupLabel>圖例</GroupLabel>
        </Group>
        <Group $w={123}>
          <GroupBody $pl={6}>
            <Stack $pb={2} $gap={7}>
              <SmallButton icon={<StoreIcon />} label="市集" />
              <SmallButton icon={<MyAppsIcon />} label="我的應用程式" caret={9} />
            </Stack>
          </GroupBody>
          <GroupLabel>增益集</GroupLabel>
        </Group>
        <Group $w={62}>
          <GroupBody>
            <BigButton $w={60} $px={0} icon={<VideoIcon />} label="線上視訊" />
          </GroupBody>
          <GroupLabel>媒體</GroupLabel>
        </Group>
        <Group $w={86}>
          <GroupBody $pl={6}>
            <Stack $pb={4}>
              <SmallButton icon={<LinkIcon />} label="超連結" />
              <SmallButton icon={<BookmarkIcon />} label="書籤" />
              <SmallButton icon={<CrossRefIcon />} label="交互參照" />
            </Stack>
          </GroupBody>
          <GroupLabel>連結</GroupLabel>
        </Group>
        <Group $w={51}>
          <GroupBody>
            <BigButton $w={50} $px={0} icon={<CommentIcon />} label="註解" />
          </GroupBody>
          <GroupLabel>註解</GroupLabel>
        </Group>
        <Group $w={135}>
          <GroupBody $pl={4}>
            <BigButton $w={42} $px={0} arrow label="頁首" icon={
              <DocOutline><rect x="3" y="5" width="9" height="6" fill={ORANGE} /></DocOutline>
            } />
            <BigButton $w={42} $px={0} arrow label="頁尾" icon={
              <DocOutline><rect x="3" y="19" width="15" height="6" fill={ORANGE} /></DocOutline>
            } />
            <BigButton $w={42} $px={0} arrow label="頁碼" icon={
              <DocOutline>
                <text x="10.5" y="22" fontSize="14" fontWeight="700" fill={BLUE} textAnchor="middle" fontFamily="Liberation Sans">#</text>
              </DocOutline>
            } />
          </GroupBody>
          <GroupLabel>頁首及頁尾</GroupLabel>
        </Group>
        <Group $w={322}>
          <GroupBody $pl={3}>
            <BigButton $w={54} $px={0} icon={<TextBoxIcon />} label="文字方塊" arrow />
            <BigButton $w={54} $px={0} icon={<QuickPartsIcon />} label="快速組件" arrow />
            <BigButton $w={64} $px={0} icon={<WordArtIcon />} label="文字藝術師" arrow />
            <BigButton $w={53} $px={0} $disabled icon={<DropCapIcon />} label="首字放大" arrow />
            <Stack $pb={4} $ml={2}>
              <SmallButton icon={<SignIcon />} label="簽名欄" caret={9} />
              <SmallButton icon={<DateIcon />} label="日期及時間" />
              <SmallButton icon={<ObjectIcon />} label="物件" caret={9} />
            </Stack>
          </GroupBody>
          <GroupLabel>文字</GroupLabel>
        </Group>
        <Group $w={87}>
          <GroupBody $pl={6}>
            <Stack $pb={4}>
              <SmallButton icon={<GlyphIcon $s={24}>π</GlyphIcon>} label="方程式" caret={9} />
              <SmallButton icon={<GlyphIcon $s={20}>Ω</GlyphIcon>} label="符號" caret={3} />
              <SmallButton icon={<NumberIcon />} label="數字" />
            </Stack>
          </GroupBody>
          <GroupLabel>符號</GroupLabel>
        </Group>
        <Collapse><Chevron /></Collapse>
      </Ribbon>

      <Workspace>
        <Corner>
          <CornerBtn><LIcon /></CornerBtn>
        </Corner>
        <HRulerSlot>
          <HRuler>
            {hNums.map((n, i) => (
              <HTick key={i}>{n}</HTick>
            ))}
          </HRuler>
          <RulerMarks width="760" height="30" viewBox="0 0 760 30">
            <g fill="#fff" stroke="#8a8a8a">
              <path d="M7.5 2.5H16.5V5.5L12 10.5L7.5 5.5Z" />
              <path d="M12 11.5L16.5 16.5V20.5H7.5V16.5Z" />
              <rect x="7.5" y="20.5" width="9" height="6" />
              <path d="M618.5 20.5V17.5L622.5 13L626.5 17.5V20.5Z" />
            </g>
          </RulerMarks>
        </HRulerSlot>
        <VRulerSlot>
          {vNums.map((n, i) => (
            <VTick key={i}>
              <span>{n}</span>
            </VTick>
          ))}
        </VRulerSlot>
        <Page>
          <TableRow>
            <CropMark $v $x={0} />
            <CropMark $x={-25} />
            <CropMark $v $x={612} />
            <CropMark $x={612} />
            <DocTable>
              <ReturnMark />
            </DocTable>
            <AfterMark>
              <ReturnMark />
            </AfterMark>
          </TableRow>
          <ParaMark>
            <ReturnMark />
          </ParaMark>
        </Page>
      </Workspace>

      <Status>
        <StatusSide $pl={8}>
          <StatusItem $w={111}>第 1 頁，共 39 頁</StatusItem>
          <StatusItem $w={75}>1223 個字</StatusItem>
          <StatusItem $w={32}><StatusBook /></StatusItem>
          <StatusItem>中文 (台灣)</StatusItem>
        </StatusSide>
        <StatusSide $pr={5}>
          <ViewBtn><ReadIcon /></ViewBtn>
          <ViewBtn $active><PrintIcon /></ViewBtn>
          <ViewBtn><WebIcon /></ViewBtn>
          <ZoomSign $ml={3}><MinusSign /></ZoomSign>
          <Slider><Thumb /></Slider>
          <ZoomSign><PlusSign /></ZoomSign>
          <Percent>110%</Percent>
        </StatusSide>
      </Status>

      <Menu>
        <MenuHead>1x1 表格</MenuHead>
        <Grid>
          {Array.from({ length: 80 }, (_, i) => (
            <Cell key={i} $on={i === 0} />
          ))}
        </Grid>
        <MenuSep />
        <MenuItem><MenuIcon><TableSmall /></MenuIcon>插入表格(<u>I</u>)...</MenuItem>
        <MenuItem><MenuIcon><DrawTableIcon /></MenuIcon>手繪表格(<u>D</u>)</MenuItem>
        <MenuItem $disabled><MenuIcon><ConvertIcon /></MenuIcon>文字轉換為表格(<u>V</u>)...</MenuItem>
        <MenuItem><MenuIcon><ExcelIcon /></MenuIcon>Excel 試算表(<u>X</u>)</MenuItem>
        <MenuItem><MenuIcon><TableSmall /></MenuIcon>快速表格(<u>T</u>)<SubArrow /></MenuItem>
      </Menu>
    </Shell>
  );
}
